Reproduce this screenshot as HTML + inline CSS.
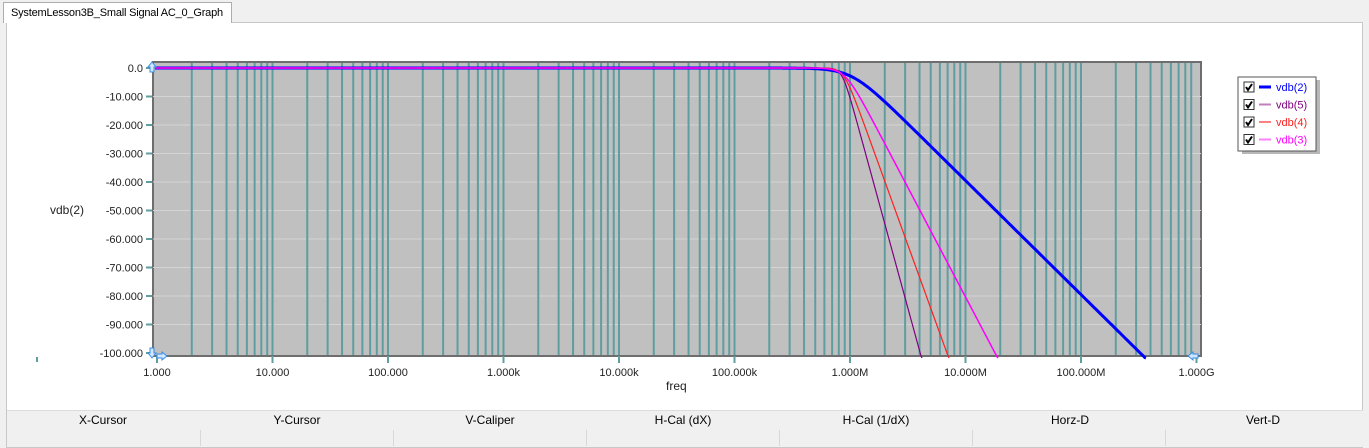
<!DOCTYPE html><html><head><style>
body{margin:0;width:1369px;height:448px;background:#f0f0f0;font-family:"Liberation Sans",sans-serif;overflow:hidden;position:relative}
.tab{position:absolute;left:3px;top:2px;width:229px;height:21px;background:#fff;border:1px solid #adadad;border-bottom:none;font-size:11px;line-height:20px;padding-left:7px;box-sizing:border-box;z-index:2;white-space:nowrap;letter-spacing:-0.2px}
.panel{position:absolute;left:6px;top:22px;width:1357px;height:426px;border:1px solid #c8c8c8;background:#fff;box-sizing:border-box}
.hdr{position:absolute;left:7px;top:410px;width:1356px;height:17px;background:#f0f0f0;border-top:1px solid #dcdcdc;border-bottom:1px solid #dcdcdc;font-size:12px}
.hdr span{position:absolute;top:2px;transform:translateX(-50%)}
.row2{position:absolute;left:7px;top:428px;width:1356px;height:19px;background:#f0f0f0}
.row2 i{position:absolute;top:2px;width:1px;height:16px;background:#d8d8d8}
</style></head><body>
<div class="tab">SystemLesson3B_Small Signal AC_0_Graph</div>
<div class="panel"></div>
<svg id="s" width="1369" height="448" style="position:absolute;left:0;top:0" font-family="Liberation Sans, sans-serif"></svg>
<div class="hdr"><span style="left:96px">X-Cursor</span><span style="left:290px">Y-Cursor</span><span style="left:483px">V-Caliper</span><span style="left:676px">H-Cal (dX)</span><span style="left:869px">H-Cal (1/dX)</span><span style="left:1063px">Horz-D</span><span style="left:1256px">Vert-D</span></div>
<div class="row2"><i style="left:193px"></i><i style="left:386px"></i><i style="left:579px"></i><i style="left:772px"></i><i style="left:965px"></i><i style="left:1158px"></i></div>
<script>
var s='',X0=157,D=115.5,Y0=68,K=2.85,L=153,R=1201,T=62,B=356;
s+='<rect x="'+L+'" y="'+T+'" width="'+(R-L)+'" height="'+(B-T)+'" fill="#c0c0c0" stroke="#6e6e6e" stroke-width="2"/>';
for(var d=-10;d>=-90;d-=10){var y=Y0-d*K;s+='<line x1="'+L+'" x2="'+R+'" y1="'+y+'" y2="'+y+'" stroke="#d4d4d4" stroke-width="1"/>';}
for(var e=0;e<9;e++)for(var m=1;m<10;m++){var x=X0+D*(e+Math.log10(m));if(x>R-1)continue;if(m==1&&e==0)continue;s+='<line x1="'+x+'" x2="'+x+'" y1="'+(T+1)+'" y2="'+(B-1)+'" stroke="#5f9ea0" stroke-width="2"/>';}
var labs=['1.000','10.000','100.000','1.000k','10.000k','100.000k','1.000M','10.000M','100.000M','1.000G'];
for(var i=0;i<10;i++){var x=X0+D*i;s+='<line x1="'+x+'" x2="'+x+'" y1="'+B+'" y2="'+(B+7)+'" stroke="#5f9ea0" stroke-width="2"/><text x="'+x+'" y="'+(B+20)+'" font-size="11" text-anchor="middle" fill="#222">'+labs[i]+'</text>';}
for(var d=0;d>=-100;d-=10){var y=Y0-d*K;s+='<line x1="146" x2="152" y1="'+y+'" y2="'+y+'" stroke="#5f9ea0" stroke-width="2"/><text x="143" y="'+(y+4)+'" font-size="11" text-anchor="end" fill="#222">'+(d==0?'0.0':d.toFixed(3))+'</text>';}
s+='<text x="50" y="214" font-size="12" fill="#222">vdb(2)</text><text x="666" y="390" font-size="12" fill="#222">freq</text><rect x="36" y="357" width="2" height="5" fill="#5f9ea0"/>';
function curve(p2,fc,col,w){var p='';for(var x=L+2;x<R;x+=1){var f=Math.pow(10,(x-X0)/D);var db=-10*Math.log10(1+Math.pow(f/fc,p2));var y=Y0-db*K;if(y>B+2){p+=(p?'L':'M')+x+' '+(B+2);break;}p+=(p?'L':'M')+x+' '+y.toFixed(1);}s+='<path d="'+p+'" fill="none" stroke="'+col+'" stroke-width="'+w+'"/>';}
curve(4,1.03e6,'#0000ff',3);curve(14.8,0.855e6,'#800080',1.2);curve(11.2,0.884e6,'#ff2020',1.2);curve(7.7,0.905e6,'#ff00ff',1.5);
s+='<path d="M152 62l-4 5h2v5h4v-5h2z" fill="#cfe6ff" stroke="#3a8be0"/><path d="M152 358l-4-5h2v-5h4v5h2z" fill="#cfe6ff" stroke="#3a8be0"/><path d="M167 356l-5-4v2h-5v4h5v2z" fill="#cfe6ff" stroke="#3a8be0"/><path d="M1188 356l5-4v2h5v4h-5v2z" fill="#cfe6ff" stroke="#3a8be0"/>';
s+='<rect x="1242" y="80" width="78" height="74" fill="#888" opacity=".6"/><rect x="1238" y="77" width="78" height="74" fill="#fff" stroke="#555"/>';
var lg=[['vdb(2)','#0000ff','#0000ff',3],['vdb(5)','#800080','#c080c0',2],['vdb(4)','#ff2020','#ff8080',2],['vdb(3)','#ff00ff','#ff80ff',2]];
for(var i=0;i<4;i++){var y=82+i*17.5;s+='<rect x="1244" y="'+y+'" width="10" height="10" fill="#fff" stroke="#333"/><path d="M1246 '+(y+5)+'l2 3l4-6" stroke="#000" stroke-width="2" fill="none"/><line x1="1259" x2="1271" y1="'+(y+5)+'" y2="'+(y+5)+'" stroke="'+lg[i][2]+'" stroke-width="'+lg[i][3]+'"/><text x="1276" y="'+(y+9)+'" font-size="11" fill="'+lg[i][1]+'">'+lg[i][0]+'</text>';}
document.getElementById('s').innerHTML=s;
</script>
</body></html>
